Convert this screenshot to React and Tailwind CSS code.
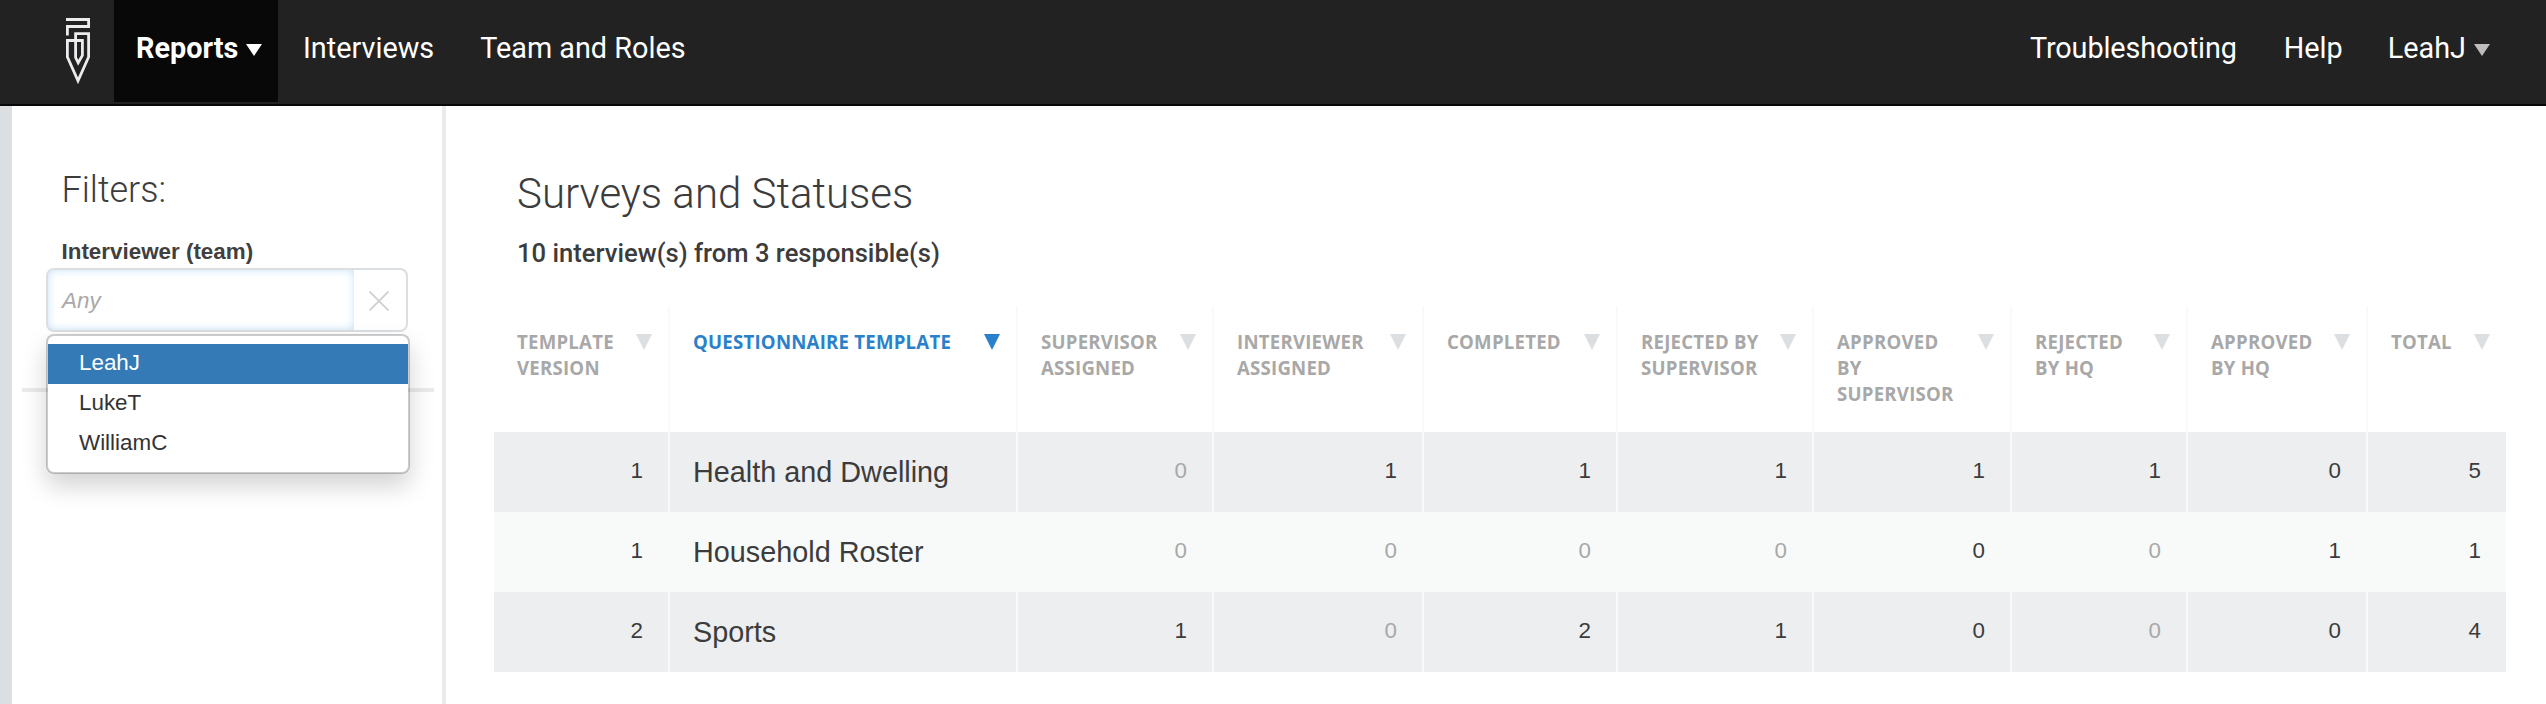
const columns = [
  { lines: ["TEMPLATE", "VERSION"], width: "w-[176px]" },
  { lines: ["QUESTIONNAIRE TEMPLATE"], width: "w-[348px]", active: true },
  { lines: ["SUPERVISOR", "ASSIGNED"], width: "w-[196px]" },
  { lines: ["INTERVIEWER", "ASSIGNED"], width: "w-[210px]" },
  { lines: ["COMPLETED"], width: "w-[194px]" },
  { lines: ["REJECTED BY", "SUPERVISOR"], width: "w-[196px]" },
  { lines: ["APPROVED", "BY", "SUPERVISOR"], width: "w-[198px]" },
  { lines: ["REJECTED", "BY HQ"], width: "w-[176px]" },
  { lines: ["APPROVED", "BY HQ"], width: "w-[180px]" },
  { lines: ["TOTAL"], width: "w-[138px]" },
];

// Each count is [value, muted]; muted counts have no report behind them.
const rows = [
  {
    version: 1,
    name: "Health and Dwelling",
    counts: [[0, true], [1], [1], [1], [1], [1], [0], [5]],
  },
  {
    version: 1,
    name: "Household Roster",
    counts: [[0, true], [0, true], [0, true], [0, true], [0], [0, true], [1], [1]],
  },
  {
    version: 2,
    name: "Sports",
    counts: [[1], [0, true], [2], [1], [0], [0, true], [0], [4]],
  },
];

const people = ["LeahJ", "LukeT", "WilliamC"];

function Caret({ className }) {
  return (
    <svg viewBox="0 0 16 12" className={`h-3 w-4 shrink-0 ${className}`}>
      <path d="M0 0H16L8 12Z" fill="currentColor" />
    </svg>
  );
}

function SortArrow({ active }) {
  return (
    <svg
      viewBox="0 0 16 16"
      className={`mt-[5px] size-4 shrink-0 ${active ? "text-[#2a81cb]" : "text-[#dbdfe2]"}`}
    >
      <path d="M0 0H16L8 16Z" fill="currentColor" />
    </svg>
  );
}

function Logo() {
  return (
    <svg viewBox="0 0 24 66" className="mt-[18px] h-[66px] w-6" fill="none" stroke="#ececee">
      <path d="M0 1.5H22.6V8.5H1.4V17.5" strokeWidth="2.8" />
      <path
        d="M9.6 40V15.6H22.6V39L12 62.8L1.4 39V22.5H16.4V37.5L12.2 44.8L9.6 39.5V15.6"
        strokeWidth="2.8"
      />
    </svg>
  );
}

function Header() {
  return (
    <header className="flex h-[106px] border-b-2 border-[#080808] bg-[#222222] font-[Roboto,sans-serif] text-[28.8px] leading-[96px] text-white">
      <div className="w-[114px] pl-[66px]">
        <Logo />
      </div>
      <nav className="flex flex-1">
        <a className="flex h-[102px] w-[164px] bg-[#080808] pl-[22px] font-bold">
          Reports
          <Caret className="mt-11 ml-2" />
        </a>
        <a className="ml-[25px]">Interviews</a>
        <a className="ml-[46px]">Team and Roles</a>
      </nav>
      <nav className="flex pr-14">
        <a className="tracking-[-0.1px]">Troubleshooting</a>
        <a className="ml-[47px]">Help</a>
        <a className="ml-[45px] flex">
          LeahJ
          <Caret className="mt-11 ml-2 text-[#bdbdbd]" />
        </a>
      </nav>
    </header>
  );
}

function Sidebar() {
  return (
    <aside className="w-[446px] border-r-4 border-l-12 border-r-[#ebebeb] border-l-[#dbdfe2] font-['Liberation_Sans',Arial,sans-serif] text-[22.4px]">
      <h2 className="mt-[62px] ml-[49.5px] font-[Roboto,sans-serif] text-[36px] leading-[44px] font-light text-[#3c3c3c]">
        Filters:
      </h2>
      <div className="relative mt-6 ml-[34px] w-[362px]">
        <label className="block pl-[15.5px] leading-8 font-bold text-[#404040]">
          Interviewer (team)
        </label>
        <div className="flex h-16 overflow-hidden rounded-lg border-2 border-[#dbdfe2] bg-white">
          <div className="w-[306px] pl-3.5 leading-[61px] text-[#a8a8a8] italic shadow-[inset_0_0_8px_#c3e1fa]">
            Any
          </div>
          <div className="flex flex-1 items-center justify-center pr-[3px]">
            <svg viewBox="0 0 20 20" className="mt-0.5 size-5">
              <path d="M0.5 0.5L19.5 19.5M19.5 0.5L0.5 19.5" stroke="#cfcfcf" strokeWidth="1.8" />
            </svg>
          </div>
        </div>
        <ul className="absolute top-[98px] left-0 h-[140px] w-[364px] rounded-lg border-2 border-black/20 bg-white bg-clip-padding pt-2 shadow-[0_12px_24px_rgba(0,0,0,0.175)]">
          {people.map((person, i) => (
            <li
              key={person}
              className={`h-10 pl-[31px] leading-[38px] ${i === 0 ? "bg-[#337ab7] text-white" : "text-[#333333]"}`}
            >
              {person}
            </li>
          ))}
        </ul>
      </div>
      <hr className="mt-14 mr-2 ml-2.5 border-0 border-t-4 border-[#ebebeb]" />
    </aside>
  );
}

function StatusTable() {
  return (
    <table className="mt-[38px] w-[2012px] table-fixed border-separate border-spacing-0 text-[22.4px] text-[#3c3c3c]">
      <thead>
        <tr className="h-[126px]">
          {columns.map((column, i) => (
            <th
              key={i}
              className={`${column.width} border-[#f8faf9] p-0 text-left align-top font-['Open_Sans',sans-serif] text-[20px] leading-[26px] font-bold tracking-[0.25px] not-last:border-r-2 ${
                column.active ? "text-[#2a81cb]" : "text-[#a8a8a8]"
              }`}
            >
              <div className="flex justify-between pt-[23px] pr-4 pl-[23px]">
                <span className="w-0 origin-left scale-x-[0.93]">
                  {column.lines.map((line) => (
                    <span key={line} className="block whitespace-nowrap">
                      {line}
                    </span>
                  ))}
                </span>
                <SortArrow active={column.active} />
              </div>
            </th>
          ))}
        </tr>
      </thead>
      <tbody>
        {rows.map((row) => (
          <tr key={row.name} className="h-20 odd:bg-[#edeef0] even:bg-[#f8faf9]">
            <td className="border-r-2 border-[#f8faf9] p-0 pr-[25px] pb-0.5 text-right">{row.version}</td>
            <td className="border-r-2 border-[#f8faf9] p-0 pt-0.5 pl-[23px] text-[28.8px]">{row.name}</td>
            {row.counts.map(([value, muted], i) => (
              <td
                key={i}
                className={`border-[#f8faf9] p-0 pr-[25px] pb-0.5 text-right not-last:border-r-2 ${muted ? "text-[#a8a8a8]" : ""}`}
              >
                {value}
              </td>
            ))}
          </tr>
        ))}
      </tbody>
    </table>
  );
}

export default function App() {
  return (
    <div className="flex h-[704px] w-[2546px] flex-col overflow-hidden bg-white">
      <Header />
      <div className="flex flex-1">
        <Sidebar />
        <main className="flex-1 pl-12 font-['Liberation_Sans',Arial,sans-serif]">
          <div className="pt-[62px] pl-[23px] font-[Roboto,sans-serif] text-[#3c3c3c]">
            <h1 className="text-[42px] leading-[52px] font-light">Surveys and Statuses</h1>
            <p className="mt-[18px] text-[25.6px] leading-[30px] font-medium">
              10 interview(s) from 3 responsible(s)
            </p>
          </div>
          <StatusTable />
        </main>
      </div>
    </div>
  );
}
